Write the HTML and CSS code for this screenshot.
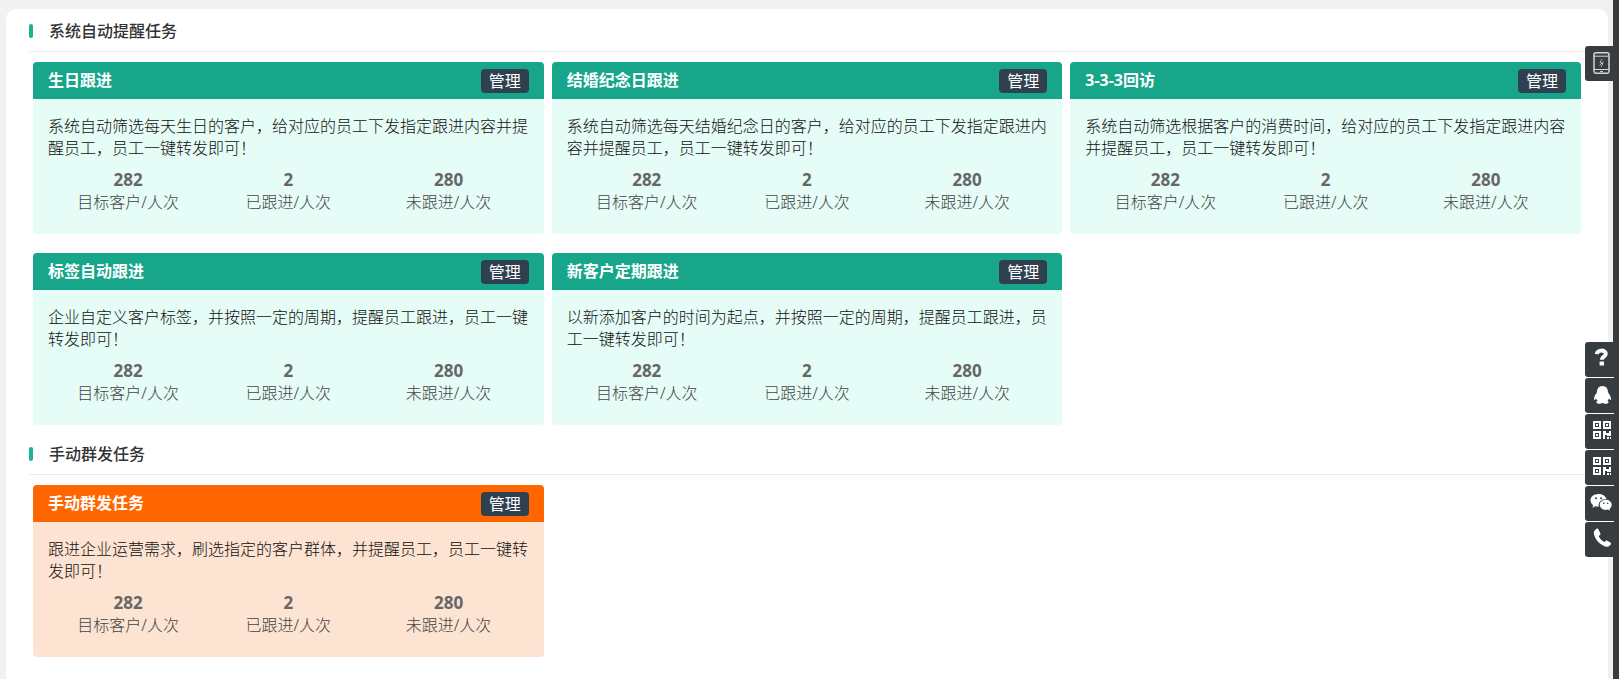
FILE: index.html
```html
<!DOCTYPE html>
<html lang="zh-CN">
<head>
<meta charset="utf-8">
<meta name="viewport" content="width=device-width, initial-scale=1">
<title>跟进任务</title>
<link rel="stylesheet" href="styles.css">
</head>
<body>
<main class="panel">
  <section class="section">
    <h2 class="section-title">系统自动提醒任务</h2>
    <div class="cards">
      <article class="card">
        <header class="card-head"><h3 class="card-title">生日跟进</h3><button class="manage" type="button">管理</button></header>
        <div class="card-body">
          <p class="desc">系统自动筛选每天生日的客户，给对应的员工下发指定跟进内容并提醒员工，员工一键转发即可！</p>
          <dl class="stats">
            <div class="stat"><dt>目标客户/人次</dt><dd>282</dd></div>
            <div class="stat"><dt>已跟进/人次</dt><dd>2</dd></div>
            <div class="stat"><dt>未跟进/人次</dt><dd>280</dd></div>
          </dl>
        </div>
      </article>
      <article class="card">
        <header class="card-head"><h3 class="card-title">结婚纪念日跟进</h3><button class="manage" type="button">管理</button></header>
        <div class="card-body">
          <p class="desc">系统自动筛选每天结婚纪念日的客户，给对应的员工下发指定跟进内容并提醒员工，员工一键转发即可！</p>
          <dl class="stats">
            <div class="stat"><dt>目标客户/人次</dt><dd>282</dd></div>
            <div class="stat"><dt>已跟进/人次</dt><dd>2</dd></div>
            <div class="stat"><dt>未跟进/人次</dt><dd>280</dd></div>
          </dl>
        </div>
      </article>
      <article class="card">
        <header class="card-head"><h3 class="card-title">3-3-3回访</h3><button class="manage" type="button">管理</button></header>
        <div class="card-body">
          <p class="desc">系统自动筛选根据客户的消费时间，给对应的员工下发指定跟进内容并提醒员工，员工一键转发即可！</p>
          <dl class="stats">
            <div class="stat"><dt>目标客户/人次</dt><dd>282</dd></div>
            <div class="stat"><dt>已跟进/人次</dt><dd>2</dd></div>
            <div class="stat"><dt>未跟进/人次</dt><dd>280</dd></div>
          </dl>
        </div>
      </article>
      <article class="card">
        <header class="card-head"><h3 class="card-title">标签自动跟进</h3><button class="manage" type="button">管理</button></header>
        <div class="card-body">
          <p class="desc">企业自定义客户标签，并按照一定的周期，提醒员工跟进，员工一键转发即可！</p>
          <dl class="stats">
            <div class="stat"><dt>目标客户/人次</dt><dd>282</dd></div>
            <div class="stat"><dt>已跟进/人次</dt><dd>2</dd></div>
            <div class="stat"><dt>未跟进/人次</dt><dd>280</dd></div>
          </dl>
        </div>
      </article>
      <article class="card">
        <header class="card-head"><h3 class="card-title">新客户定期跟进</h3><button class="manage" type="button">管理</button></header>
        <div class="card-body">
          <p class="desc">以新添加客户的时间为起点，并按照一定的周期，提醒员工跟进，员工一键转发即可！</p>
          <dl class="stats">
            <div class="stat"><dt>目标客户/人次</dt><dd>282</dd></div>
            <div class="stat"><dt>已跟进/人次</dt><dd>2</dd></div>
            <div class="stat"><dt>未跟进/人次</dt><dd>280</dd></div>
          </dl>
        </div>
      </article>
    </div>
  </section>
  <section class="section">
    <h2 class="section-title">手动群发任务</h2>
    <div class="cards">
      <article class="card card-manual">
        <header class="card-head"><h3 class="card-title">手动群发任务</h3><button class="manage" type="button">管理</button></header>
        <div class="card-body">
          <p class="desc">跟进企业运营需求，刷选指定的客户群体，并提醒员工，员工一键转发即可！</p>
          <dl class="stats">
            <div class="stat"><dt>目标客户/人次</dt><dd>282</dd></div>
            <div class="stat"><dt>已跟进/人次</dt><dd>2</dd></div>
            <div class="stat"><dt>未跟进/人次</dt><dd>280</dd></div>
          </dl>
        </div>
      </article>
    </div>
  </section>
</main>
<aside class="dock">
  <button class="tab" type="button" aria-label="手机版">
    <svg class="icon" viewBox="0 0 20 24" fill="none" stroke="#d4d6d8" stroke-width="1.5"><rect x="3" y="2.800" width="15" height="20.5" rx="2"/><path d="M3 6.200h15M3 19.500h15M9 21.400h3" stroke-width="1"/><path d="M11 9l-2 3.500 3 1-2 3.500M8.500 15.500l4-4" stroke-width=".8"/></svg>
  </button>
  <div class="tab-group">
    <button class="tab" type="button" aria-label="帮助">
      <svg class="icon" viewBox="0 0 20 24" fill="none" stroke="#fff" stroke-width="4"><path d="M5.800 8.200C6 3.500 14.800 3.500 14.800 7.800c0 3-4 2.800-4 6"/><path d="M10.800 15.500v4" stroke-width="4.400"/></svg>
    </button>
    <button class="tab" type="button" aria-label="QQ">
      <svg class="icon" viewBox="0 0 20 24" fill="#fff"><path d="M11.500 4C7.800 4 6 6.800 6 10.200c-1.700 2.400-3.200 5-2.900 7.200.2 1.100 1.200.3 2-.9.300 1 .8 1.800 1.500 2.500-2 .8-1.400 2.800 1.200 2.800 1.700 0 2.800-.4 3.700-1 .9.600 2 1 3.700 1 2.600 0 3.200-2 1.200-2.800.7-.7 1.200-1.500 1.500-2.500.8 1.200 1.800 2 2 .9.300-2.200-1.200-4.800-2.900-7.200C17 6.800 15.200 4 11.500 4z"/></svg>
    </button>
    <button class="tab" type="button" aria-label="二维码">
      <svg class="icon" viewBox="0 0 20 24"><path fill="none" stroke="#fff" stroke-width="2" d="M3 4H9v6H3zM13 4h6v6h-6zM3 14H9v6H3z"/><path fill="#fff" d="M5 6h2v2H5zM15 6h2v2h-2zM5 16h2v2H5zM12 13h3v2h3v-2h2v5h-4v-1h-2v4h-2zM16 19h2v2h-2zM19 19h1v2h-1z"/></svg>
    </button>
    <button class="tab" type="button" aria-label="公众号二维码">
      <svg class="icon" viewBox="0 0 20 24"><path fill="none" stroke="#fff" stroke-width="2" d="M3 4H9v6H3zM13 4h6v6h-6zM3 14H9v6H3z"/><path fill="#fff" d="M5 6h2v2H5zM15 6h2v2h-2zM5 16h2v2H5zM12 13h3v2h3v-2h2v5h-4v-1h-2v4h-2zM16 19h2v2h-2zM19 19h1v2h-1z"/></svg>
    </button>
    <button class="tab" type="button" aria-label="微信">
      <svg class="icon icon-wide" viewBox="0 0 24 24"><path fill="#fff" d="M9.500 4C4.800 4 1.500 6.800 1.500 10.300c0 2 1 3.700 2.700 4.900l-.8 2.500 2.900-1.500c1 .3 2 .5 3.400.5C8.800 12 12.500 8.700 17.400 8.900 16.500 6 13.300 4 9.500 4z"/><path fill="#fff" d="M22.700 14.700c0-2.900-2.700-5-6-5s-6 2.200-6 5 2.700 5.100 6 5.100c.8 0 1.600-.1 2.300-.4l2.200 1.200-.6-2c1.300-.9 2.100-2.300 2.100-3.900z"/><g fill="#373c41"><circle cx="7" cy="8.200" r="1"/><circle cx="12" cy="8.200" r="1"/><circle cx="14.700" cy="13.200" r=".8"/><circle cx="18.700" cy="13.200" r=".8"/></g></svg>
    </button>
    <button class="tab" type="button" aria-label="电话">
      <svg class="icon" viewBox="0 0 20 24" fill="#fff"><path d="M5.200 3L3 5.200C1.600 11 9.500 20.500 16.500 20.700c1 0 3-1.600 3.400-2.700.2-.7 0-1-.6-1.400l-3-1.900c-.6-.4-1.200-.3-1.700.2l-1.200 1.200c-2.300-.8-5-3.700-5.700-6L9 9c.5-.5.600-1 .3-1.700L7.500 3.500C7 2.500 6 2.300 5.200 3z"/></svg>
    </button>
  </div>
</aside>
</body>
</html>
```
FILE: styles.css
```css
* {
  box-sizing: border-box;
}

body {
  margin: 0;
  min-height: 100vh;
  display: flex;
  padding: 9px 5px 0 6px;
  border-right: 6px solid #373c41;
  background: #f1f1f1;
  color: #333;
  font: 16px/22px "Noto Sans", "Noto Sans CJK SC", sans-serif;
}

h2, h3, p, dl, dd {
  margin: 0;
}

.panel {
  flex: 1;
  min-width: 0;
  padding: 0 23px 16px;
  border-radius: 10px 10px 0 0;
  background: #fff;
}

.section {
  margin-bottom: 7px;
}

.section-title {
  display: flex;
  align-items: center;
  gap: 16px;
  height: 43px;
  padding-top: 2px;
  border-bottom: 1px solid #e8ecec;
  font-size: 16px;
  font-weight: 500;
}

.section-title::before {
  content: "";
  width: 4px;
  height: 14px;
  border-radius: 2px;
  background: #1ab394;
}

.cards {
  display: grid;
  grid-template-columns: repeat(3, minmax(0, 1fr));
  gap: 19px 8px;
  padding: 10px 4px 0;
}

.card {
  overflow: hidden;
  border-radius: 4px;
  background: #e6fcf7;
}

.card-head {
  display: flex;
  align-items: center;
  justify-content: space-between;
  height: 37px;
  padding: 0 15px;
  background: #17a689;
  color: #fff;
}

.card-title {
  padding-bottom: 2px;
  font-size: 16px;
  font-weight: 700;
}

.manage {
  width: 48px;
  height: 24px;
  padding: 0;
  border: 0;
  border-radius: 4px;
  background: #2f4050;
  color: #fff;
  font: inherit;
  line-height: 24px;
}

.card-body {
  padding: 16px 15px 21px;
}

.desc {
  color: #111;
  font-weight: 300;
}

.stats {
  display: grid;
  grid-template-columns: repeat(3, 1fr);
  padding-top: 10px;
  color: #666;
  text-align: center;
}

.stat {
  display: flex;
  flex-direction: column-reverse;
}

.stat dt {
  color: #444;
  font-weight: 300;
}

.stat dd {
  font-size: 17px;
  font-weight: 700;
}

.card-manual {
  background: #fde3d2;
}

.card-manual .card-head {
  background: #ff6600;
}

.dock {
  position: fixed;
  top: 46px;
  right: 5px;
  display: flex;
  flex-direction: column;
  gap: 261px;
}

.tab-group {
  display: flex;
  flex-direction: column;
  gap: 1px;
  background: #fff;
}

.tab {
  display: flex;
  align-items: center;
  justify-content: center;
  width: 29px;
  height: 35px;
  padding: 0 0 3px 2px;
  border: 0;
  border-radius: 3px 0 0 3px;
  background: #373c41;
}

.icon {
  flex: none;
  width: 20px;
  height: 24px;
}

.icon-wide {
  width: 24px;
}
```
